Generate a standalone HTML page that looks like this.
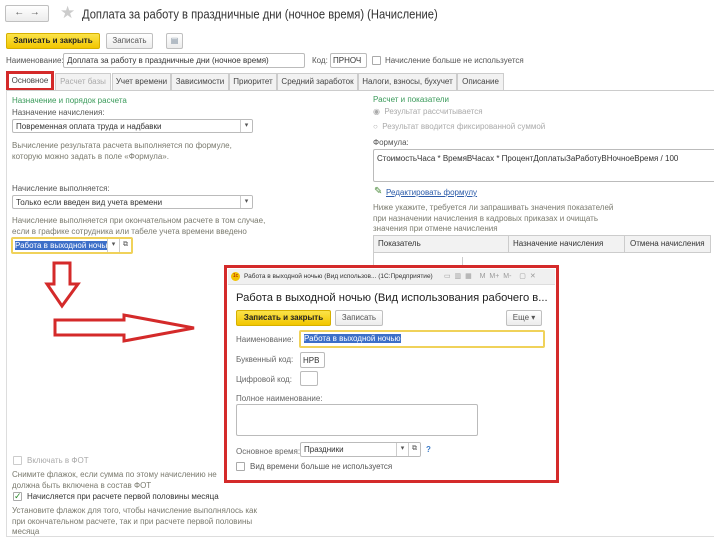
<!DOCTYPE html>
<html><head><meta charset="utf-8"><style>
*{box-sizing:border-box;margin:0;padding:0}
body{width:714px;height:541px;background:#fff;font-family:"Liberation Sans",sans-serif;font-size:8px;color:#333;position:relative;overflow:hidden}
.a{position:absolute;white-space:nowrap}
.g{color:#7a7a6e}
.gr{color:#3a9a5a}
.inp{position:absolute;border:1px solid #bbb;background:#fff;border-radius:2px;overflow:hidden}
.btn{position:absolute;border:1px solid #c0c0c0;border-radius:2px;background:linear-gradient(#fff,#ececec);text-align:center;color:#555}
.y{background:linear-gradient(#fbe34a,#f2c600);border-color:#d6b000;color:#222;font-weight:bold}
.tab{position:absolute;top:73px;height:17px;border:1px solid #ccc;border-bottom:none;background:#f2f2f2;text-align:center;line-height:16px;color:#444}
.dd{position:absolute;right:0;top:0;bottom:0;width:12px;border-left:1px solid #ccc;background:#fff;text-align:center;font-size:7px;line-height:12px;color:#555}
.cb{position:absolute;width:9px;height:9px;border:1px solid #aaa;border-radius:1px;background:#fff}
.sel{background:#3d6fc8;color:#fff}
</style></head><body>
<!-- header -->
<div class="btn" style="left:5px;top:5px;width:44px;height:17px;font-size:10px;line-height:14px">←&nbsp;&nbsp;→</div>
<div class="a" style="left:60px;top:3px;font-size:17px;color:#ccc">★</div>
<div class="a" style="left:82px;top:8px;font-size:11.2px;transform:scaleY(1.15);transform-origin:left top;color:#333">Доплата за работу в праздничные дни (ночное время) (Начисление)</div>
<div class="btn y" style="left:6px;top:33px;width:94px;height:16px;line-height:14px">Записать и закрыть</div>
<div class="btn" style="left:106px;top:33px;width:47px;height:16px;line-height:14px">Записать</div>
<div class="btn" style="left:166px;top:33px;width:17px;height:16px;line-height:14px;color:#789">▤</div>
<div class="a" style="left:6px;top:56px;color:#555">Наименование:</div>
<div class="inp" style="left:63px;top:53px;width:242px;height:15px;padding:2px 3px">Доплата за работу в праздничные дни (ночное время)</div>
<div class="a" style="left:312px;top:56px;color:#555">Код:</div>
<div class="inp" style="left:330px;top:53px;width:37px;height:15px;padding:2px 2px">ПРНОЧ</div>
<div class="cb" style="left:372px;top:56px"></div>
<div class="a" style="left:385px;top:56px;color:#555">Начисление больше не используется</div>
<!-- tabs -->
<div class="tab" style="left:6px;width:48px;background:#fff;border:3px solid #d42a2a;height:20px;top:71px;line-height:14px">Основное</div>
<div class="tab" style="left:55px;width:56px;color:#aaa">Расчет базы</div>
<div class="tab" style="left:112px;width:59px">Учет времени</div>
<div class="tab" style="left:171px;width:58px">Зависимости</div>
<div class="tab" style="left:229px;width:48px">Приоритет</div>
<div class="tab" style="left:277px;width:81px">Средний заработок</div>
<div class="tab" style="left:358px;width:99px">Налоги, взносы, бухучет</div>
<div class="tab" style="left:457px;width:47px">Описание</div>
<div class="a" style="left:6px;top:90px;width:708px;height:1px;background:#ccc"></div>
<div class="a" style="left:6px;top:90px;width:1px;height:447px;background:#ddd"></div>
<div class="a" style="left:6px;top:536px;width:708px;height:1px;background:#ddd"></div>
<!-- left -->
<div class="a gr" style="left:12px;top:96px">Назначение и порядок расчета</div>
<div class="a" style="left:12px;top:108px;color:#555">Назначение начисления:</div>
<div class="inp" style="left:12px;top:119px;width:241px;height:14px;padding:2px 3px">Повременная оплата труда и надбавки<div class="dd">▾</div></div>
<div class="a g" style="left:12px;top:140px;line-height:11px">Вычисление результата расчета выполняется по формуле,<br>которую можно задать в поле «Формула».</div>
<div class="a" style="left:12px;top:184px;color:#555">Начисление выполняется:</div>
<div class="inp" style="left:12px;top:195px;width:241px;height:14px;padding:2px 3px">Только если введен вид учета времени<div class="dd">▾</div></div>
<div class="a g" style="left:12px;top:215px;line-height:11px">Начисление выполняется при окончательном расчете в том случае,<br>если в графике сотрудника или табеле учета времени введено</div>
<div class="inp" style="left:11px;top:237px;width:122px;height:17px;border:2px solid #f0d25a;padding:2px 2px"><span class="sel">Работа в выходной ночью</span><div class="dd" style="right:12px">▾</div><div class="dd">⧉</div></div>
<!-- right -->
<div class="a gr" style="left:373px;top:95px">Расчет и показатели</div>
<div class="a" style="left:373px;top:107px;color:#aaa">◉&nbsp; Результат рассчитывается</div>
<div class="a" style="left:373px;top:122px;color:#aaa">○&nbsp; Результат вводится фиксированной суммой</div>
<div class="a" style="left:373px;top:138px;color:#555">Формула:</div>
<div class="inp" style="left:373px;top:149px;width:345px;height:33px;padding:4px 3px">СтоимостьЧаса * ВремяВЧасах * ПроцентДоплатыЗаРаботуВНочноеВремя / 100</div>
<div class="a" style="left:374px;top:186px;color:#4a8a3a;font-size:10px">✎</div>
<div class="a" style="left:386px;top:188px;color:#2a5aa8;text-decoration:underline">Редактировать формулу</div>
<div class="a g" style="left:373px;top:203px;line-height:10.5px">Ниже укажите, требуется ли запрашивать значения показателей<br>при назначении начисления в кадровых приказах и очищать<br>значения при отмене начисления</div>
<div class="a" style="left:373px;top:235px;width:338px;height:18px;border:1px solid #ccc;background:#f2f2f2"></div>
<div class="a" style="left:373px;top:252px;width:1px;height:20px;background:#ccc"></div>
<div class="a" style="left:378px;top:239px">Показатель</div>
<div class="a" style="left:508px;top:235px;width:1px;height:18px;background:#ccc"></div>
<div class="a" style="left:513px;top:239px">Назначение начисления</div>
<div class="a" style="left:624px;top:235px;width:1px;height:18px;background:#ccc"></div>
<div class="a" style="left:630px;top:239px">Отмена начисления</div>
<div class="a" style="left:462px;top:257px;width:1px;height:10px;background:#ccc"></div>
<!-- arrows -->
<svg class="a" style="left:0;top:0" width="714" height="541"><g fill="#fff" stroke="#d42a2a" stroke-width="3">
<polygon points="54,263 70,263 70,284 78,284 62,306 47,284 54,284"/>
<polygon points="55,320 124,320 124,315 194,328 124,341 124,335 55,335"/></g></svg>
<!-- bottom left -->
<div class="cb" style="left:13px;top:456px;border-color:#ccc"></div>
<div class="a" style="left:27px;top:456px;color:#aaa">Включать в ФОТ</div>
<div class="a g" style="left:12px;top:470px;line-height:10.5px">Снимите флажок, если сумма по этому начислению не<br>должна быть включена в состав ФОТ</div>
<div class="cb" style="left:13px;top:492px;color:#2a8a2a;font-size:9px;line-height:7px;text-align:center">✓</div>
<div class="a" style="left:27px;top:492px">Начисляется при расчете первой половины месяца</div>
<div class="a g" style="left:12px;top:506px;line-height:10.5px">Установите флажок для того, чтобы начисление выполнялось как<br>при окончательном расчете, так и при расчете первой половины<br>месяца</div>
<!-- dialog -->
<div class="a" style="left:224px;top:265px;width:335px;height:218px;border:3px solid #d42a2a;background:#fff;overflow:hidden">
 <div class="a" style="left:1px;top:1px;width:327px;height:16px;background:#f0f0f0;border-bottom:1px solid #ddd"></div>
 <div class="a" style="left:4px;top:4px;width:9px;height:9px;border-radius:50%;background:#f2c200;font-size:5px;color:#a00;text-align:center;line-height:9px">1c</div>
 <div class="a" style="left:17px;top:5px;font-size:6.5px;color:#333">Работа в выходной ночью (Вид использов... (1С:Предприятие)</div>
 <div class="a" style="left:217px;top:4px;font-size:7px;color:#999;word-spacing:2px">▭ ▥ ▦ &nbsp;M M+ M- &nbsp;▢ ✕</div>
 <div class="a" style="left:9px;top:24px;font-size:11.2px;color:#222">Работа в выходной ночью (Вид использования рабочего в...</div>
 <div class="btn y" style="left:9px;top:42px;width:95px;height:16px;line-height:14px">Записать и закрыть</div>
 <div class="btn" style="left:108px;top:42px;width:48px;height:16px;line-height:14px">Записать</div>
 <div class="btn" style="left:279px;top:42px;width:36px;height:16px;line-height:14px">Еще ▾</div>
 <div class="a" style="left:9px;top:67px;color:#666">Наименование:</div>
 <div class="inp" style="left:72px;top:62px;width:246px;height:18px;border:2px solid #f0d25a;padding:2px 3px"><span class="sel">Работа в выходной ночью</span></div>
 <div class="a" style="left:9px;top:87px;color:#666">Буквенный код:</div>
 <div class="inp" style="left:73px;top:84px;width:25px;height:16px;padding:3px 2px">НРВ</div>
 <div class="a" style="left:9px;top:107px;color:#666">Цифровой код:</div>
 <div class="inp" style="left:73px;top:103px;width:18px;height:15px"></div>
 <div class="a" style="left:9px;top:126px;color:#666">Полное наименование:</div>
 <div class="inp" style="left:9px;top:136px;width:242px;height:32px"></div>
 <div class="a" style="left:9px;top:179px;color:#666">Основное время:</div>
 <div class="inp" style="left:73px;top:174px;width:121px;height:15px;padding:2px 3px">Праздники<div class="dd" style="right:12px">▾</div><div class="dd">⧉</div></div>
 <div class="a" style="left:199px;top:177px;color:#3a7ac8;font-weight:bold">?</div>
 <div class="cb" style="left:9px;top:194px"></div>
 <div class="a" style="left:23px;top:194px;color:#555">Вид времени больше не используется</div>
</div>
</body></html>
